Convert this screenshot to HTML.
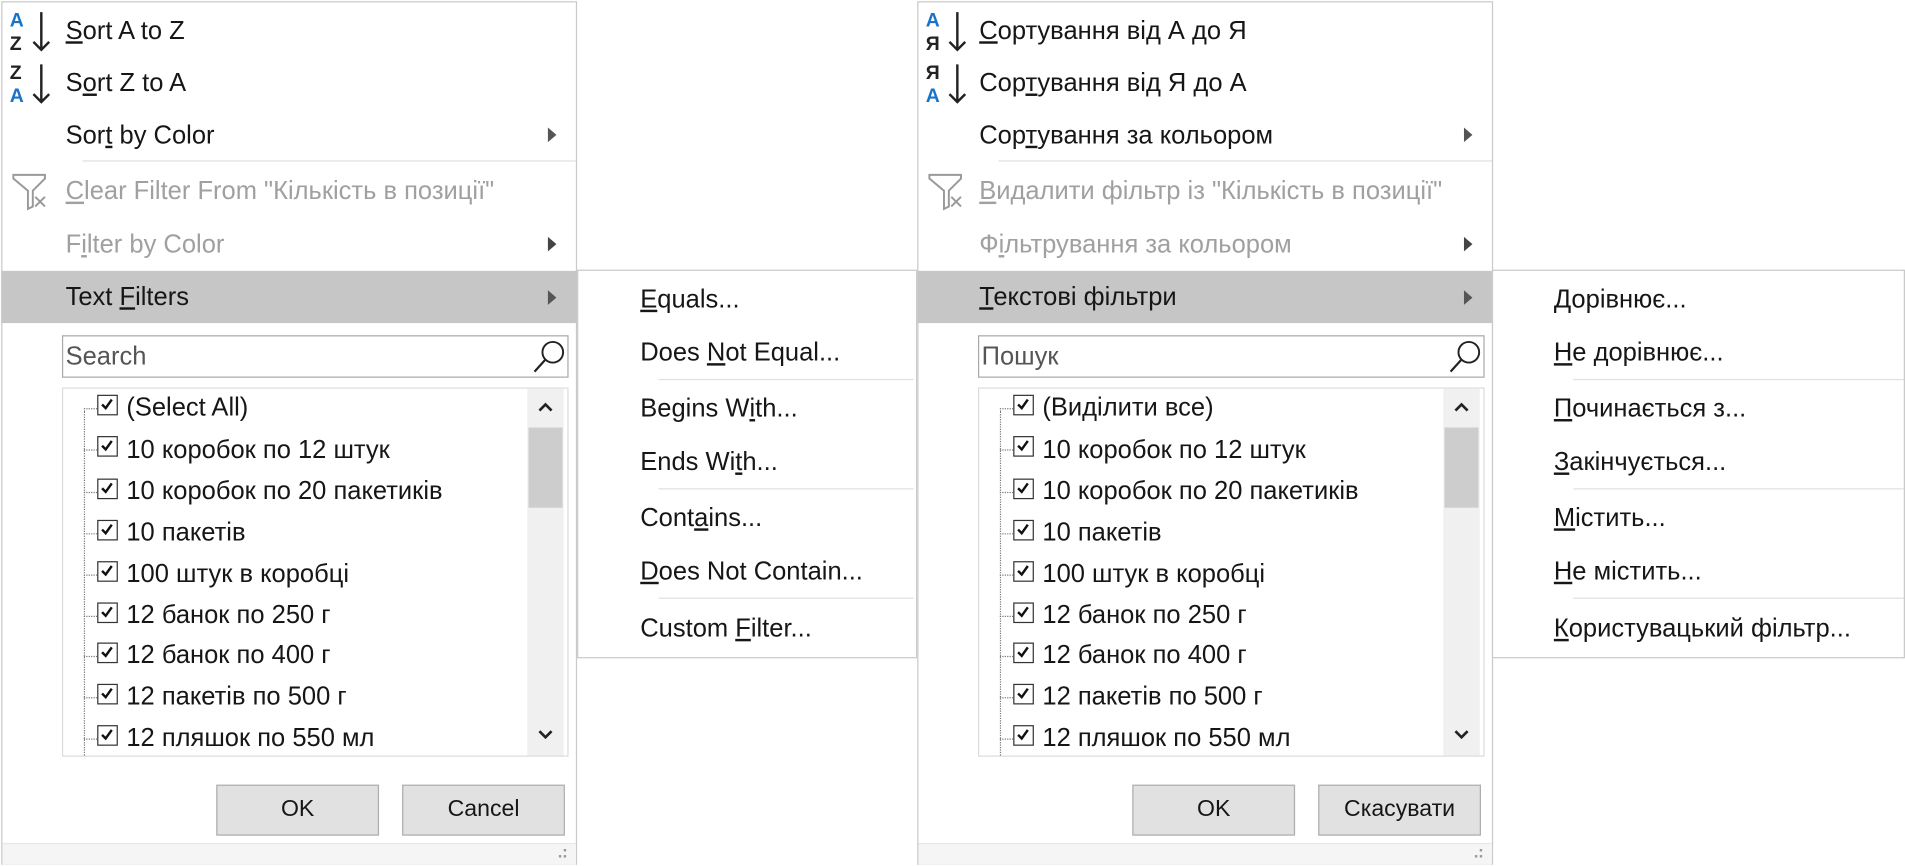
<!DOCTYPE html>
<html><head><meta charset="utf-8"><style>
*{margin:0;padding:0;box-sizing:border-box}
html,body{width:1905px;height:866px;background:#fff;overflow:hidden}
#wrap{position:absolute;left:0;top:0;width:1568px;height:713px;transform:scale(1.2149,1.2146);transform-origin:0 0;font-family:"Liberation Sans","DejaVu Sans",sans-serif;font-size:21px;color:#161616}
.panel{position:absolute;top:1px;width:474px;height:711px;border:1px solid #c9c9c9;background:#fff}
.t{position:absolute;white-space:nowrap;line-height:22px}
.dis{color:#a0a0a0}
.arr{position:absolute;width:0;height:0;border-left:7px solid #555;border-top:6px solid transparent;border-bottom:6px solid transparent}
.dis2{border-left-color:#444}
.sep{position:absolute;height:1px;background:#e0e0e0}
.hl{position:absolute;left:-1px;top:221px;width:474px;height:43px;background:#c6c6c6}
.search{position:absolute;left:49px;top:274px;width:417px;height:35px;border:1px solid #a9a9a9;background:#fff}
.list{position:absolute;left:49px;top:317px;width:417px;height:304px;border:1px solid #dcdcdc;background:#fff}
.sb{position:absolute;left:382px;top:0;width:30px;height:302px;background:#f0f0f0}
.thumb{position:absolute;left:1px;top:32px;width:28px;height:66px;background:#cdcdcd}
.cb{position:absolute;left:28px;width:17px;height:17px;border:1.5px solid #333;background:#fff}
.cb svg{position:absolute;left:1px;top:1px}
.vline{position:absolute;left:17px;top:18px;height:284px;border-left:1px dotted #777}
.hline{position:absolute;left:17px;width:11px;border-top:1px dotted #777}
.it{position:absolute;left:52px;line-height:22px;white-space:nowrap}
.btn{position:absolute;top:644px;width:134px;height:42px;background:#e1e1e1;border:1px solid #adadad;text-align:center;line-height:40px;font-size:19px}
.bot{position:absolute;left:0;top:692px;width:472px;height:18px;background:#f5f5f5;border-top:1px solid #e8e8e8}
.sub{position:absolute;top:222px;height:320px;border:1px solid #c9c9c9;background:#fff}
</style></head><body><div id="wrap">

<!-- LEFT PANEL -->
<div class="panel" style="left:1px">
 <svg style="position:absolute;left:5px;top:5px" width="38" height="38" viewBox="0 0 38 38">
  <text x="1" y="15" font-family="Liberation Sans" font-size="16" font-weight="bold" fill="#1a73c7">A</text>
  <text x="1" y="34" font-family="Liberation Sans" font-size="16" font-weight="bold" fill="#222">Z</text>
  <path d="M27 3V34M20.5 27.5l6.5 6.5 6.5-6.5" stroke="#222" stroke-width="2" fill="none"/>
 </svg>
 <div class="t" style="left:52px;top:13px"><u>S</u>ort A to Z</div>
 <svg style="position:absolute;left:5px;top:48px" width="38" height="38" viewBox="0 0 38 38">
  <text x="1" y="15" font-family="Liberation Sans" font-size="16" font-weight="bold" fill="#222">Z</text>
  <text x="1" y="34" font-family="Liberation Sans" font-size="16" font-weight="bold" fill="#1a73c7">A</text>
  <path d="M27 3V34M20.5 27.5l6.5 6.5 6.5-6.5" stroke="#222" stroke-width="2" fill="none"/>
 </svg>
 <div class="t" style="left:52px;top:56px">S<u>o</u>rt Z to A</div>
 <div class="t" style="left:52px;top:99px">Sor<u>t</u> by Color</div>
 <div class="arr" style="left:449px;top:103px"></div>
 <div class="sep" style="left:66px;top:130px;width:406px"></div>
 <svg style="position:absolute;left:7px;top:140px" width="32" height="32" viewBox="0 0 32 32">
  <path d="M2 2H28V5L18 15V28L14 30V15L2 5Z" fill="none" stroke="#999" stroke-width="1.6"/>
  <path d="M20 20l8 8M28 20l-8 8" stroke="#999" stroke-width="1.6"/>
 </svg>
 <div class="t dis" style="left:52px;top:145px"><u>C</u>lear Filter From "Кількість в позиції"</div>
 <div class="t dis" style="left:52px;top:189px">F<u>i</u>lter by Color</div>
 <div class="arr dis2" style="left:449px;top:193px"></div>
 <div class="hl"></div>
 <div class="t" style="left:52px;top:232px">Text <u>F</u>ilters</div>
 <div class="arr" style="left:449px;top:237px"></div>
 <div class="search"><div class="t" style="left:2px;top:6px;color:#555">Search</div>
  <svg style="position:absolute;left:385px;top:2px" width="30" height="30" viewBox="0 0 30 30"><circle cx="18" cy="11" r="8.5" fill="none" stroke="#222" stroke-width="1.6"/><path d="M12 17L3 27" stroke="#222" stroke-width="1.8"/></svg></div>
 <div class="list">
  <div class="vline"></div>
  <div class="hline" style="top:16px"></div><div class="cb" style="top:5px"><svg width="12" height="12" viewBox="0 0 12 12"><path d="M2 6l3 3 5-7" stroke="#111" stroke-width="2" fill="none"/></svg></div><div class="it" style="top:5px">(Select All)</div>
  <div class="hline" style="top:50px"></div><div class="cb" style="top:39px"><svg width="12" height="12" viewBox="0 0 12 12"><path d="M2 6l3 3 5-7" stroke="#111" stroke-width="2" fill="none"/></svg></div><div class="it" style="top:40px">10 коробок по 12 штук</div>
  <div class="hline" style="top:85px"></div><div class="cb" style="top:74px"><svg width="12" height="12" viewBox="0 0 12 12"><path d="M2 6l3 3 5-7" stroke="#111" stroke-width="2" fill="none"/></svg></div><div class="it" style="top:74px">10 коробок по 20 пакетиків</div>
  <div class="hline" style="top:119px"></div><div class="cb" style="top:108px"><svg width="12" height="12" viewBox="0 0 12 12"><path d="M2 6l3 3 5-7" stroke="#111" stroke-width="2" fill="none"/></svg></div><div class="it" style="top:108px">10 пакетів</div>
  <div class="hline" style="top:153px"></div><div class="cb" style="top:142px"><svg width="12" height="12" viewBox="0 0 12 12"><path d="M2 6l3 3 5-7" stroke="#111" stroke-width="2" fill="none"/></svg></div><div class="it" style="top:142px">100 штук в коробці</div>
  <div class="hline" style="top:187px"></div><div class="cb" style="top:176px"><svg width="12" height="12" viewBox="0 0 12 12"><path d="M2 6l3 3 5-7" stroke="#111" stroke-width="2" fill="none"/></svg></div><div class="it" style="top:176px">12 банок по 250 г</div>
  <div class="hline" style="top:220px"></div><div class="cb" style="top:209px"><svg width="12" height="12" viewBox="0 0 12 12"><path d="M2 6l3 3 5-7" stroke="#111" stroke-width="2" fill="none"/></svg></div><div class="it" style="top:209px">12 банок по 400 г</div>
  <div class="hline" style="top:254px"></div><div class="cb" style="top:243px"><svg width="12" height="12" viewBox="0 0 12 12"><path d="M2 6l3 3 5-7" stroke="#111" stroke-width="2" fill="none"/></svg></div><div class="it" style="top:243px">12 пакетів по 500 г</div>
  <div class="hline" style="top:288px"></div><div class="cb" style="top:277px"><svg width="12" height="12" viewBox="0 0 12 12"><path d="M2 6l3 3 5-7" stroke="#111" stroke-width="2" fill="none"/></svg></div><div class="it" style="top:277px">12 пляшок по 550 мл</div>
  <div class="sb"><div class="thumb"></div>
   <svg style="position:absolute;left:8px;top:10px" width="14" height="10" viewBox="0 0 14 10"><path d="M2 8l5-5 5 5" stroke="#222" stroke-width="2.2" fill="none"/></svg>
   <svg style="position:absolute;left:8px;top:280px" width="14" height="10" viewBox="0 0 14 10"><path d="M2 2l5 5 5-5" stroke="#222" stroke-width="2.2" fill="none"/></svg>
  </div>
 </div>
 <div class="btn" style="left:176px">OK</div>
 <div class="btn" style="left:329px">Cancel</div>
 <div class="bot"><svg style="position:absolute;left:456px;top:4px" width="10" height="10"><rect x="6" y="0" width="2" height="2" fill="#999"/><rect x="2" y="5" width="2" height="2" fill="#999"/><rect x="6" y="5" width="2" height="2" fill="#999"/></svg></div>
</div>

<div class="sub" style="left:475px;width:280px">
 <div class="t" style="left:51px;top:13px"><u>E</u>quals...</div>
 <div class="t" style="left:51px;top:57px">Does <u>N</u>ot Equal...</div>
 <div class="sep" style="left:66px;top:89px;width:210px"></div>
 <div class="t" style="left:51px;top:103px">Begins W<u>i</u>th...</div>
 <div class="t" style="left:51px;top:147px">Ends Wi<u>t</u>h...</div>
 <div class="sep" style="left:66px;top:179px;width:210px"></div>
 <div class="t" style="left:51px;top:193px">Cont<u>a</u>ins...</div>
 <div class="t" style="left:51px;top:237px"><u>D</u>oes Not Contain...</div>
 <div class="sep" style="left:66px;top:269px;width:210px"></div>
 <div class="t" style="left:51px;top:284px">Custom <u>F</u>ilter...</div>
</div>

<!-- RIGHT PANEL -->
<div class="panel" style="left:755px">
 <svg style="position:absolute;left:5px;top:5px" width="38" height="38" viewBox="0 0 38 38">
  <text x="1" y="15" font-family="Liberation Sans" font-size="16" font-weight="bold" fill="#1a73c7">A</text>
  <text x="1" y="34" font-family="Liberation Sans" font-size="16" font-weight="bold" fill="#222">Я</text>
  <path d="M27 3V34M20.5 27.5l6.5 6.5 6.5-6.5" stroke="#222" stroke-width="2" fill="none"/>
 </svg>
 <div class="t" style="left:50px;top:13px"><u>С</u>ортування від А до Я</div>
 <svg style="position:absolute;left:5px;top:48px" width="38" height="38" viewBox="0 0 38 38">
  <text x="1" y="15" font-family="Liberation Sans" font-size="16" font-weight="bold" fill="#222">Я</text>
  <text x="1" y="34" font-family="Liberation Sans" font-size="16" font-weight="bold" fill="#1a73c7">A</text>
  <path d="M27 3V34M20.5 27.5l6.5 6.5 6.5-6.5" stroke="#222" stroke-width="2" fill="none"/>
 </svg>
 <div class="t" style="left:50px;top:56px">Сор<u>т</u>ування від Я до А</div>
 <div class="t" style="left:50px;top:99px">Сор<u>т</u>ування за кольором</div>
 <div class="arr" style="left:449px;top:103px"></div>
 <div class="sep" style="left:66px;top:130px;width:406px"></div>
 <svg style="position:absolute;left:7px;top:140px" width="32" height="32" viewBox="0 0 32 32">
  <path d="M2 2H28V5L18 15V28L14 30V15L2 5Z" fill="none" stroke="#999" stroke-width="1.6"/>
  <path d="M20 20l8 8M28 20l-8 8" stroke="#999" stroke-width="1.6"/>
 </svg>
 <div class="t dis" style="left:50px;top:145px"><u>В</u>идалити фільтр із "Кількість в позиції"</div>
 <div class="t dis" style="left:50px;top:189px">Ф<u>і</u>льтрування за кольором</div>
 <div class="arr dis2" style="left:449px;top:193px"></div>
 <div class="hl"></div>
 <div class="t" style="left:50px;top:232px"><u>Т</u>екстові фільтри</div>
 <div class="arr" style="left:449px;top:237px"></div>
 <div class="search"><div class="t" style="left:2px;top:6px;color:#555">Пошук</div>
  <svg style="position:absolute;left:385px;top:2px" width="30" height="30" viewBox="0 0 30 30"><circle cx="18" cy="11" r="8.5" fill="none" stroke="#222" stroke-width="1.6"/><path d="M12 17L3 27" stroke="#222" stroke-width="1.8"/></svg></div>
 <div class="list">
  <div class="vline"></div>
  <div class="hline" style="top:16px"></div><div class="cb" style="top:5px"><svg width="12" height="12" viewBox="0 0 12 12"><path d="M2 6l3 3 5-7" stroke="#111" stroke-width="2" fill="none"/></svg></div><div class="it" style="top:5px">(Виділити все)</div>
  <div class="hline" style="top:50px"></div><div class="cb" style="top:39px"><svg width="12" height="12" viewBox="0 0 12 12"><path d="M2 6l3 3 5-7" stroke="#111" stroke-width="2" fill="none"/></svg></div><div class="it" style="top:40px">10 коробок по 12 штук</div>
  <div class="hline" style="top:85px"></div><div class="cb" style="top:74px"><svg width="12" height="12" viewBox="0 0 12 12"><path d="M2 6l3 3 5-7" stroke="#111" stroke-width="2" fill="none"/></svg></div><div class="it" style="top:74px">10 коробок по 20 пакетиків</div>
  <div class="hline" style="top:119px"></div><div class="cb" style="top:108px"><svg width="12" height="12" viewBox="0 0 12 12"><path d="M2 6l3 3 5-7" stroke="#111" stroke-width="2" fill="none"/></svg></div><div class="it" style="top:108px">10 пакетів</div>
  <div class="hline" style="top:153px"></div><div class="cb" style="top:142px"><svg width="12" height="12" viewBox="0 0 12 12"><path d="M2 6l3 3 5-7" stroke="#111" stroke-width="2" fill="none"/></svg></div><div class="it" style="top:142px">100 штук в коробці</div>
  <div class="hline" style="top:187px"></div><div class="cb" style="top:176px"><svg width="12" height="12" viewBox="0 0 12 12"><path d="M2 6l3 3 5-7" stroke="#111" stroke-width="2" fill="none"/></svg></div><div class="it" style="top:176px">12 банок по 250 г</div>
  <div class="hline" style="top:220px"></div><div class="cb" style="top:209px"><svg width="12" height="12" viewBox="0 0 12 12"><path d="M2 6l3 3 5-7" stroke="#111" stroke-width="2" fill="none"/></svg></div><div class="it" style="top:209px">12 банок по 400 г</div>
  <div class="hline" style="top:254px"></div><div class="cb" style="top:243px"><svg width="12" height="12" viewBox="0 0 12 12"><path d="M2 6l3 3 5-7" stroke="#111" stroke-width="2" fill="none"/></svg></div><div class="it" style="top:243px">12 пакетів по 500 г</div>
  <div class="hline" style="top:288px"></div><div class="cb" style="top:277px"><svg width="12" height="12" viewBox="0 0 12 12"><path d="M2 6l3 3 5-7" stroke="#111" stroke-width="2" fill="none"/></svg></div><div class="it" style="top:277px">12 пляшок по 550 мл</div>
  <div class="sb"><div class="thumb"></div>
   <svg style="position:absolute;left:8px;top:10px" width="14" height="10" viewBox="0 0 14 10"><path d="M2 8l5-5 5 5" stroke="#222" stroke-width="2.2" fill="none"/></svg>
   <svg style="position:absolute;left:8px;top:280px" width="14" height="10" viewBox="0 0 14 10"><path d="M2 2l5 5 5-5" stroke="#222" stroke-width="2.2" fill="none"/></svg>
  </div>
 </div>
 <div class="btn" style="left:176px">OK</div>
 <div class="btn" style="left:329px">Скасувати</div>
 <div class="bot"><svg style="position:absolute;left:456px;top:4px" width="10" height="10"><rect x="6" y="0" width="2" height="2" fill="#999"/><rect x="2" y="5" width="2" height="2" fill="#999"/><rect x="6" y="5" width="2" height="2" fill="#999"/></svg></div>
</div>

<div class="sub" style="left:1228px;width:340px">
 <div class="t" style="left:50px;top:13px"><u>Д</u>орівнює...</div>
 <div class="t" style="left:50px;top:57px"><u>Н</u>е дорівнює...</div>
 <div class="sep" style="left:66px;top:89px;width:272px"></div>
 <div class="t" style="left:50px;top:103px"><u>П</u>очинається з...</div>
 <div class="t" style="left:50px;top:147px"><u>З</u>акінчується...</div>
 <div class="sep" style="left:66px;top:179px;width:272px"></div>
 <div class="t" style="left:50px;top:193px"><u>М</u>істить...</div>
 <div class="t" style="left:50px;top:237px"><u>Н</u>е містить...</div>
 <div class="sep" style="left:66px;top:269px;width:272px"></div>
 <div class="t" style="left:50px;top:284px"><u>К</u>ористувацький фільтр...</div>
</div>

</div></body></html>
